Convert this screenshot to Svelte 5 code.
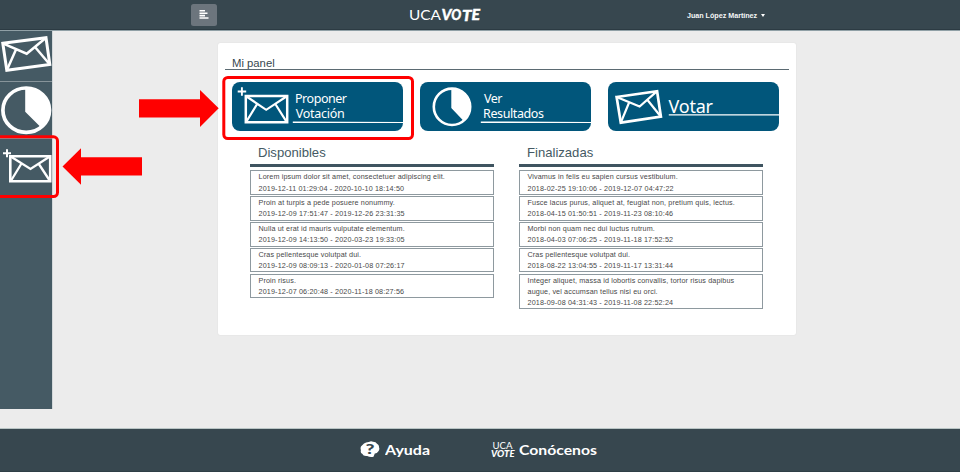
<script>
  const available = [
    ['Lorem ipsum dolor sit amet, consectetuer adipiscing elit.', '2019-12-11 01:29:04 - 2020-10-10 18:14:50'],
    ['Proin at turpis a pede posuere nonummy.', '2019-12-09 17:51:47 - 2019-12-26 23:31:35'],
    ['Nulla ut erat id mauris vulputate elementum.', '2019-12-09 14:13:50 - 2020-03-23 19:33:05'],
    ['Cras pellentesque volutpat dui.', '2019-12-09 08:09:13 - 2020-01-08 07:26:17'],
    ['Proin risus.', '2019-12-07 06:20:48 - 2020-11-18 08:27:56']
  ];
  const finished = [
    ['Vivamus in felis eu sapien cursus vestibulum.', '2018-02-25 19:10:06 - 2019-12-07 04:47:22'],
    ['Fusce lacus purus, aliquet at, feugiat non, pretium quis, lectus.', '2018-04-15 01:50:51 - 2019-11-23 08:10:46'],
    ['Morbi non quam nec dui luctus rutrum.', '2018-04-03 07:06:25 - 2019-11-18 17:52:52'],
    ['Cras pellentesque volutpat dui.', '2018-08-22 13:04:55 - 2019-11-17 13:31:44'],
    ['Integer aliquet, massa id lobortis convallis, tortor risus dapibus augue, vel accumsan tellus nisi eu orci.', '2018-09-08 04:31:43 - 2019-11-08 22:52:24']
  ];
  const columns = [
    { title: 'Disponibles', items: available },
    { title: 'Finalizadas', items: finished }
  ];
</script>

<div class="page">
  <header>
    <button class="toggle" aria-label="Menu">
      <svg width="10" height="9" viewBox="0 0 10 9" fill="#fff">
        <path d="M.5 0h5.5v1.6H.5zM.5 2.4h8v1.6H.5zM.5 4.8h5.5v1.6H.5zM.5 7.2h9v1.6H.5z" />
      </svg>
    </button>
    <svg class="brand" width="76" height="20" viewBox="0 0 76 20" fill="#fff">
      <text x="1" y="14.7" class="uca" textLength="32" lengthAdjust="spacingAndGlyphs">UCA</text>
      <g class="vote">
        <text x="33.5" y="15.4" textLength="10" lengthAdjust="spacingAndGlyphs">V</text>
        <text x="43.2" y="15" textLength="10" lengthAdjust="spacingAndGlyphs">O</text>
        <text x="54" y="15.6" textLength="9.5" lengthAdjust="spacingAndGlyphs">T</text>
        <text x="63.5" y="14.8" textLength="8.5" lengthAdjust="spacingAndGlyphs">E</text>
      </g>
    </svg>
    <div class="user">
      <span>Juan López Martínez</span>
      <i class="caret"></i>
    </div>
  </header>

  <div class="middle">
    <nav>
      <a class="n1" href="#votar" aria-label="Votar">
        <svg width="52" height="50" viewBox="0 0 52 50" fill="none" stroke="#fff" stroke-width="3">
          <path d="M2.8 12.3L46 6.7L49.8 33.5L6.8 39.3Z" />
          <path d="M2.8 12.3L26.7 22.7L46 6.7M16 18.5L6.8 39.3M35 16L49.8 33.5" stroke-width="2.5" />
        </svg>
      </a>
      <a class="n2" href="#resultados" aria-label="Ver resultados">
        <svg width="52" height="56" viewBox="0 0 52 56">
          <ellipse cx="26.2" cy="28.2" rx="23.3" ry="22.2" fill="none" stroke="#fff" stroke-width="3.7" />
          <path d="M25.2 6V29.8L40.8 45.2L42.7 43.9A23.3 22.2 0 0 0 26.2 6Z" fill="#fff" />
        </svg>
      </a>
      <a class="n3" href="#proponer" aria-label="Proponer">
        <svg width="52" height="56" viewBox="0 0 52 56" fill="none" stroke="#fff">
          <path d="M10.3 17.3H50.2V42.3H10.3Z" stroke-width="2.6" />
          <path d="M10.3 17.3L30.5 30L50.2 17.3M21.5 24.5L10.8 42M38.5 24.5L50 42" stroke-width="2.3" />
          <path d="M3 14.3H11M7 10.2V18.3" stroke-width="2" />
        </svg>
      </a>
    </nav>

    <main>
      <h1>Mi panel</h1>
      <div class="actions">
        <button aria-label="Proponer Votación">
          <svg width="171" height="49" viewBox="0 0 171 49" fill="#fff">
            <g fill="none" stroke="#fff">
              <path d="M13.8 14H55.2V40.2H13.8Z" stroke-width="2.5" />
              <path d="M13.8 14L34.2 27.8L55.2 14M25.5 21.5L14.3 39.8M43 21.5L54.6 39.8" stroke-width="2.2" />
              <path d="M5.7 9.5H14.2M9.9 5.3V13.7" stroke-width="1.9" />
            </g>
            <text x="63" y="20.8" textLength="52">Proponer</text>
            <text x="63.7" y="35.5" textLength="49">Votación</text>
            <path d="M60.8 39.4L171 40V41H60.8Z" />
          </svg>
        </button>
        <button aria-label="Ver Resultados">
          <svg width="171" height="49" viewBox="0 0 171 49" fill="#fff">
            <circle cx="32" cy="24.8" r="18.2" fill="none" stroke="#fff" stroke-width="2.6" />
            <path d="M31.3 6.5V26L43.2 38.6L44.9 37.7A18.2 18.2 0 0 0 32 6.6Z" />
            <text x="64" y="20.8" textLength="18.5">Ver</text>
            <text x="63" y="35.5" textLength="61">Resultados</text>
            <path d="M60.8 39.4L171 40V41H60.8Z" />
          </svg>
        </button>
        <button aria-label="Votar">
          <svg width="171" height="49" viewBox="0 0 171 49" fill="#fff">
            <g fill="none" stroke="#fff">
              <path d="M8.6 15L49.1 9.2L52.9 34.7L12.8 40.6Z" stroke-width="2.7" />
              <path d="M8.6 15L31.6 24.5L49.1 9.2M21.3 20L12.8 40.6M39.3 17.8L52.9 34.7" stroke-width="2.2" />
            </g>
            <text x="60.5" y="31" class="big" textLength="44.5">Votar</text>
            <path d="M60.8 32.3H171V33.4H60.8Z" />
          </svg>
        </button>
      </div>
      <div class="columns">
        {#each columns as column}
          <section>
            <h2>{column.title}</h2>
            {#each column.items as [title, dates]}
              <article>
                <p>{title}</p>
                <p class="dates">{dates}</p>
              </article>
            {/each}
          </section>
        {/each}
      </div>
    </main>
  </div>

  <footer>
    <a class="help" href="#ayuda">
      <svg width="20" height="17" viewBox="0 0 20 17">
        <path d="M4 2.5Q6 .8 9 .9Q11-.1 13 .8Q16 .8 17 2.8Q19.3 3.8 19 6.2Q20 8.5 18.2 10.5Q17 12.7 14.8 12.6L13.5 15.7Q10 16.4 7.2 15Q3.5 15.6 2.2 12.8Q.2 12 .9 9.2Q-.2 5.5 2.2 4.2Z" fill="#fff" />
        <text x="5.6" y="12.8" class="mark" textLength="9" lengthAdjust="spacingAndGlyphs">?</text>
      </svg>
      <svg width="46" height="22" viewBox="0 0 46 22"><text x="0" y="15.7" textLength="45" lengthAdjust="spacingAndGlyphs">Ayuda</text></svg>
    </a>
    <a class="about" href="#conocenos">
      <svg width="25" height="18" viewBox="0 0 25 18">
        <text x="1.5" y="7.5" class="mini" textLength="20" lengthAdjust="spacingAndGlyphs">UCA</text>
        <text x="0" y="15.5" class="mini heavy" textLength="23.5" lengthAdjust="spacingAndGlyphs">VOTE</text>
      </svg>
      <svg width="80" height="22" viewBox="0 0 80 22"><text x="0" y="15.7" textLength="78" lengthAdjust="spacingAndGlyphs">Conócenos</text></svg>
    </a>
  </footer>

  <svg class="marks" width="960" height="472" viewBox="0 0 960 472">
    <g fill="none" stroke="#f00" stroke-width="3">
      <rect x="223.8" y="77.5" width="188.7" height="61" rx="4" />
      <rect x="-10" y="136.8" width="67.5" height="59.7" rx="4" />
    </g>
    <path fill="#f00" d="M139 99.3H200V90L218.7 108.3L200 127V117.5H139ZM142 157.3H81V148.3L62.5 166.5L81 184.8V175.6H142Z" />
  </svg>
</div>

<style>
  :global(body) { margin: 0; }
  .page { position: relative; width: 960px; height: 472px; overflow: hidden; display: flex; flex-direction: column; background: #ececec; font-family: "Liberation Sans", Arial, sans-serif; }
  header { height: 31px; box-sizing: border-box; flex: none; display: flex; align-items: flex-start; padding-left: 191px; background: #37474f; border-bottom: 1px solid #90a0a6; box-shadow: inset 0 -1px #2c3b43; }
  button { border: 0; padding: 0; margin: 0; }
  .toggle { width: 26px; height: 22px; margin-top: 4px; border-radius: 2.5px; background: #6c757d; display: flex; align-items: center; justify-content: center; }
  .toggle svg { margin-bottom: 1px; }
  .brand { margin: 5px 0 0 191px; }
  .uca { font-family: "Lato", sans-serif; font-size: 12.5px; }
  .vote { font-family: "Lato", sans-serif; font-size: 15px; font-weight: 900; font-style: italic; stroke: #fff; stroke-width: .35px; }
  .user { margin: 10px 0 0 203px; display: flex; align-items: center; height: 10px; color: #f4f6f6; font-size: 7.2px; font-weight: 700; white-space: nowrap; gap: 4px; }
  .user span { width: 70px; letter-spacing: -0.03px; }
  .caret { width: 0; height: 0; border: 0 solid transparent; border-width: 3px 2.5px 0; border-top-color: #fff; }
  .middle { flex: 1; display: flex; align-items: flex-start; min-height: 0; }
  nav { width: 52px; height: 378px; flex: none; background: #455a64; border-right: 1px solid #d3d8da; }
  nav a { display: block; border-bottom: 1px solid #87949a; overflow: hidden; }
  .n1 { height: 50px; }
  .n2 { height: 56px; }
  .n3 { border: 0; height: 56px; }
  nav svg { display: block; }
  main { width: 578px; height: 292px; box-sizing: border-box; margin: 12px 0 0 165px; padding: 12px 7px 0; background: #fff; border-radius: 2px; box-shadow: 0 0 1px #ccc; }
  h1 { margin: 0; padding-left: 7px; height: 14px; line-height: 17px; font-size: 11.3px; font-weight: 400; color: #37474f; border-bottom: 1px solid #5b6a72; }
  .actions { display: flex; gap: 17px; padding: 12px 0 0 7.3px; }
  .actions button { width: 171px; height: 49px; background: #01567b; border-radius: 8px; overflow: hidden; }
  .actions svg { display: block; }
  .actions text { font-family: "Noto Sans", "Open Sans", sans-serif; font-size: 12.5px; }
  .actions .big { font-size: 18px; }
  .columns { display: flex; gap: 25px; padding: 14px 0 0 25px; }
  section { width: 244px; display: flex; flex-direction: column; gap: 1.45px; }
  h2 { margin: 0 0 2.4px; height: 18.6px; padding-left: 8px; line-height: 16.5px; font-size: 13.1px; font-weight: 400; color: #455a64; border-bottom: 3px solid #3f5460; }
  article { box-sizing: border-box; border: 1px solid #8e999f; padding: 0 7.5px 0; min-height: 24px; }
  p { margin: 0; font-size: 7.2px; line-height: 11.2px; letter-spacing: 0.13px; color: #484848; }
  .dates { letter-spacing: 0.155px; }
  footer { height: 44px; box-sizing: border-box; flex: none; display: flex; background: #37474f; border-top: 1px solid #b9c5c5; padding: 12px 0 0 360px; box-shadow: inset 0 -1px #2f3e46; }
  footer a { display: flex; align-items: flex-start; text-decoration: none; }
  footer text { fill: #fff; font-family: "Lato", sans-serif; font-size: 14px; font-weight: 700; }
  .help { width: 131px; gap: 5px; }
  .about { gap: 3px; }
  footer a svg:last-child { margin-top: -2px; }
  footer .mark { fill: #37474f; font-size: 14px; font-weight: 900; }
  footer .mini { font-size: 8.5px; font-weight: 400; }
  footer .heavy { font-size: 9.5px; font-weight: 900; font-style: italic; }
  .marks { position: absolute; inset: 0; pointer-events: none; }
</style>
